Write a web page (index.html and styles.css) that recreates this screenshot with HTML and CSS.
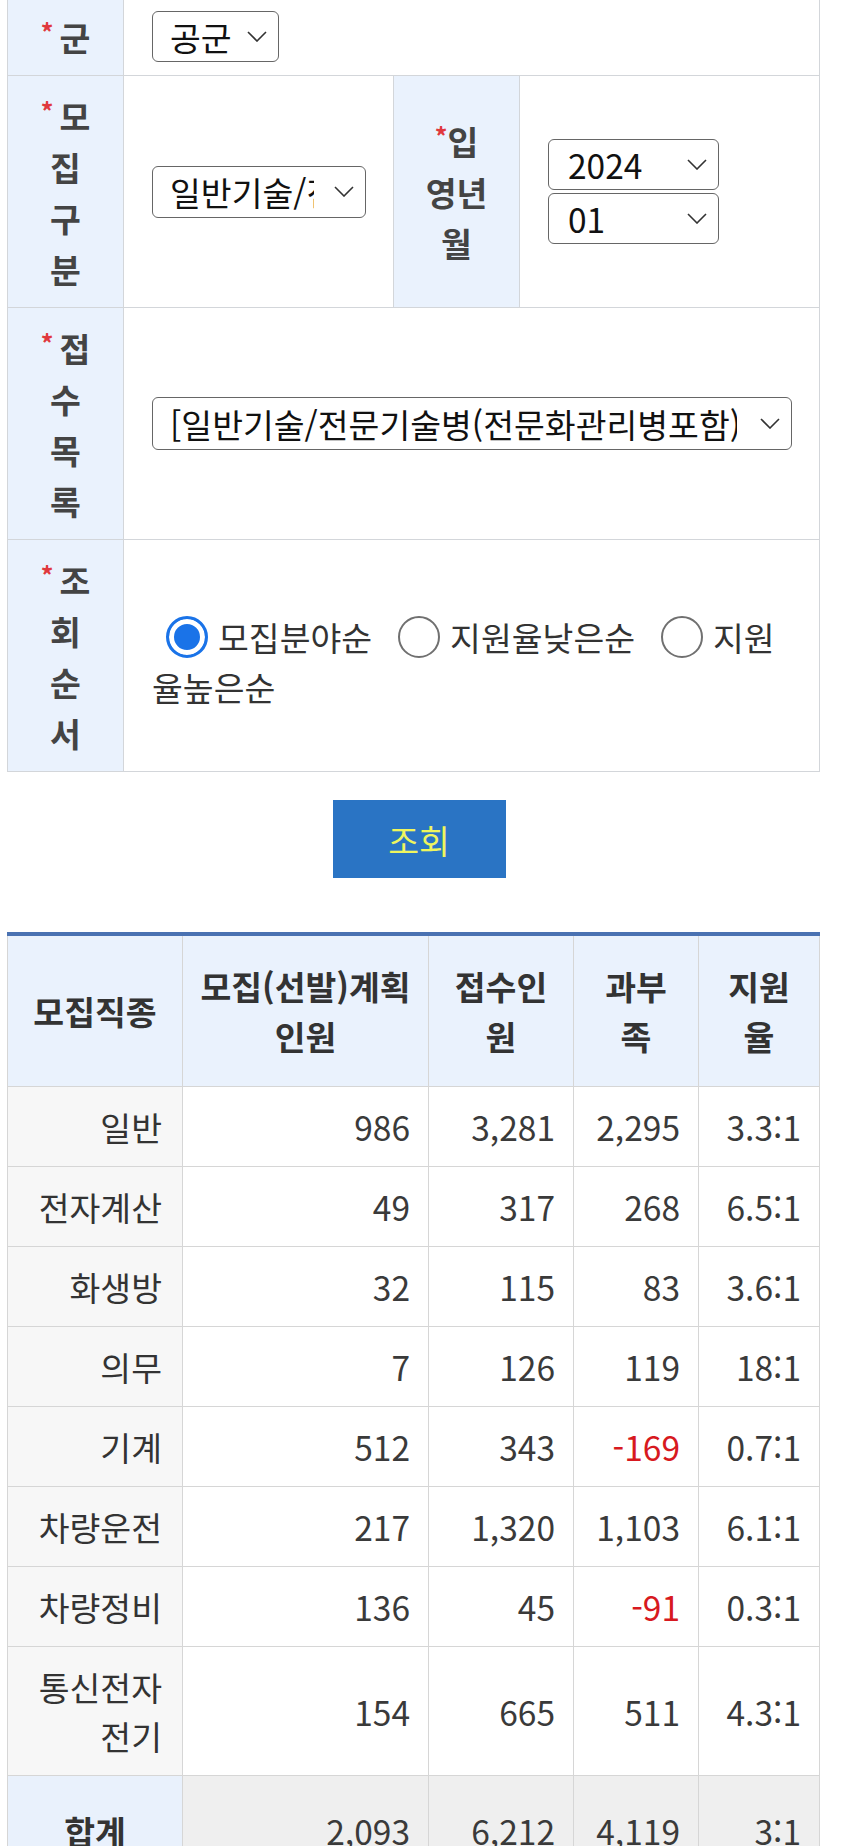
FILE: index.html
```html
<!DOCTYPE html>
<html lang="ko">
<head>
  <meta charset="UTF-8">
  <meta name="viewport" content="width=device-width, initial-scale=1.0">
  <title>모집현황 조회</title>
  <link rel="stylesheet" href="styles.css">
</head>
<body>
  <div class="page">
    <!-- 조회 조건 -->
    <table class="search-table">
      <colgroup>
        <col class="col-label">
        <col class="col-type">
        <col class="col-label2">
        <col class="col-date">
      </colgroup>
      <tr>
        <th><span class="req">*</span>군</th>
        <td colspan="3">
          <div class="select sel-branch">
            <span class="select-text">공군</span>
            <svg class="chev" viewBox="0 0 20 11" width="20" height="11"><path d="M1 1 L10 10 L19 1"/></svg>
          </div>
        </td>
      </tr>
      <tr>
        <th><span class="req">*</span>모집구분</th>
        <td>
          <div class="select sel-type">
            <span class="select-text">일반기술/전문기술병</span>
            <svg class="chev" viewBox="0 0 20 11" width="20" height="11"><path d="M1 1 L10 10 L19 1"/></svg>
          </div>
        </td>
        <th class="label-tight"><span class="req">*</span>입영년월</th>
        <td>
          <div class="select sel-date">
            <span class="select-text">2024</span>
            <svg class="chev" viewBox="0 0 20 11" width="20" height="11"><path d="M1 1 L10 10 L19 1"/></svg>
          </div>
          <div class="select sel-date">
            <span class="select-text">01</span>
            <svg class="chev" viewBox="0 0 20 11" width="20" height="11"><path d="M1 1 L10 10 L19 1"/></svg>
          </div>
        </td>
      </tr>
      <tr>
        <th><span class="req">*</span>접수목록</th>
        <td colspan="3">
          <div class="select sel-list">
            <span class="select-text">[일반기술/전문기술병(전문화관리병포함)] 2024년 01월 입영</span>
            <svg class="chev" viewBox="0 0 20 11" width="20" height="11"><path d="M1 1 L10 10 L19 1"/></svg>
          </div>
        </td>
      </tr>
      <tr>
        <th><span class="req">*</span>조회순서</th>
        <td colspan="3" class="sort-cell"><label class="opt first"><input type="radio" name="sort" checked>모집분야순</label><label class="opt"><input type="radio" name="sort">지원율낮은순</label><label class="opt"><input type="radio" name="sort">지원율높은순</label></td>
      </tr>
    </table>

    <div class="btn-row">
      <button class="btn-search">조회</button>
    </div>

    <!-- 조회 결과 -->
    <table class="result-table">
      <colgroup>
        <col class="col-kind">
        <col class="col-plan">
        <col class="col-apply">
        <col class="col-diff">
        <col class="col-rate">
      </colgroup>
      <thead>
        <tr>
          <th>모집직종</th>
          <th>모집(선발)계획인원</th>
          <th>접수인원</th>
          <th>과부족</th>
          <th>지원율</th>
        </tr>
      </thead>
      <tbody>
        <tr><th>일반</th><td>986</td><td>3,281</td><td>2,295</td><td>3.3:1</td></tr>
        <tr><th>전자계산</th><td>49</td><td>317</td><td>268</td><td>6.5:1</td></tr>
        <tr><th>화생방</th><td>32</td><td>115</td><td>83</td><td>3.6:1</td></tr>
        <tr><th>의무</th><td>7</td><td>126</td><td>119</td><td>18:1</td></tr>
        <tr><th>기계</th><td>512</td><td>343</td><td class="minus">-169</td><td>0.7:1</td></tr>
        <tr><th>차량운전</th><td>217</td><td>1,320</td><td>1,103</td><td>6.1:1</td></tr>
        <tr><th>차량정비</th><td>136</td><td>45</td><td class="minus">-91</td><td>0.3:1</td></tr>
        <tr><th>통신전자전기</th><td>154</td><td>665</td><td>511</td><td>4.3:1</td></tr>
      </tbody>
      <tfoot>
        <tr class="total"><th>합계</th><td>2,093</td><td>6,212</td><td>4,119</td><td>3:1</td></tr>
      </tfoot>
    </table>
  </div>
</body>
</html>
```

FILE: styles.css
```css
body {
  margin: 0;
  background-color: #fff;
  font-family: "Noto Sans CJK KR", "Noto Sans", sans-serif;
  font-size: 33.5px;
  color: #333;
}

.page {
  width: 813px;
  margin-left: 7px;
}

table {
  width: 100%;
  border-collapse: collapse;
  table-layout: fixed;
}

/* search form */
.search-table {
  margin-top: -4px;
}

.col-label { width: 116px; }
.col-type { width: 270px; }
.col-label2 { width: 126px; }
.col-date { width: 300px; }

.search-table th,
.search-table td {
  border: 1px solid #d3d6da;
}

.search-table th {
  background-color: #eaf2fd;
  color: #444;
  font-weight: 700;
  text-align: center;
  line-height: 51px;
  padding: 13.5px 29px;
}

.search-table td {
  padding: 0 28px;
  vertical-align: middle;
}

.req {
  position: relative;
  top: -9px;
  color: #e0383e;
  font-size: 25px;
  line-height: 0;
  margin-right: 6px;
}

.label-tight .req {
  margin-right: 0;
}

.select {
  display: flex;
  align-items: center;
  box-sizing: border-box;
  height: 51px;
  padding: 0 11px 0 17px;
  border: 1.5px solid #666;
  border-radius: 6px;
  background-color: #fff;
  color: #111;
}

.select-text {
  flex: 1;
  overflow: hidden;
  white-space: nowrap;
  margin-right: 14px;
}

.chev {
  flex: none;
  fill: none;
  stroke: #333;
  stroke-width: 1.6;
}

.sel-branch { width: 127px; }
.sel-type { width: 214px; height: 52px; }
.sel-type .select-text { margin-right: 20px; }
.sel-date { width: 171px; padding-left: 19px; }
.sel-date + .sel-date { margin-top: 3px; }
.sel-list { width: 640px; height: 53px; }
.sel-list .select-text { margin-right: 23px; }

.sort-cell {
  line-height: 50px;
  padding-top: 12px !important;
  color: #333;
}

.opt input {
  appearance: none;
  -webkit-appearance: none;
  box-sizing: border-box;
  width: 42px;
  height: 42px;
  margin: 0 10px 0 26px;
  border: 2px solid #707070;
  border-radius: 50%;
  background-color: #fff;
  vertical-align: top;
  position: relative;
  top: 4px;
}

.opt.first input {
  margin-left: 14px;
}

.opt input:checked {
  border: 3px solid #1a73e8;
  background-color: #1a73e8;
  box-shadow: inset 0 0 0 5px #fff;
}

/* search button */
.btn-row {
  text-align: center;
  padding-left: 11px;
  margin-top: 28px;
}

.btn-search {
  width: 173px;
  height: 78px;
  border: none;
  background-color: #2a74c4;
  color: #eef55e;
  font-family: inherit;
  font-size: 33.5px;
  cursor: pointer;
}

/* result table */
.result-table {
  margin-top: 54px;
  border-top: 4px solid #4a72b2;
}

.col-kind { width: 175px; }
.col-plan { width: 246px; }
.col-apply { width: 145px; }
.col-diff { width: 125px; }
.col-rate { width: 121px; }

.result-table th,
.result-table td {
  border: 1px solid #d6d6d6;
}

.result-table thead th {
  background-color: #eaf2fd;
  color: #333;
  font-weight: 700;
  text-align: center;
  line-height: 50px;
  padding: 25px 17px;
  border-top: none;
}

.result-table tbody th {
  background-color: #f7f7f7;
  font-weight: 400;
  text-align: right;
  padding: 15px 20px;
  line-height: 49px;
}

.result-table td {
  color: #3a3a3a;
  text-align: right;
  padding: 15px 18px;
  line-height: 49px;
}

.result-table td.minus {
  color: #d71920;
}

.total th {
  background-color: #e9f1fc;
  font-weight: 700;
  text-align: center;
  padding: 30px 10px;
  line-height: 49px;
}

.total td {
  background-color: #efefef;
  padding-top: 30px;
  padding-bottom: 30px;
}
```
